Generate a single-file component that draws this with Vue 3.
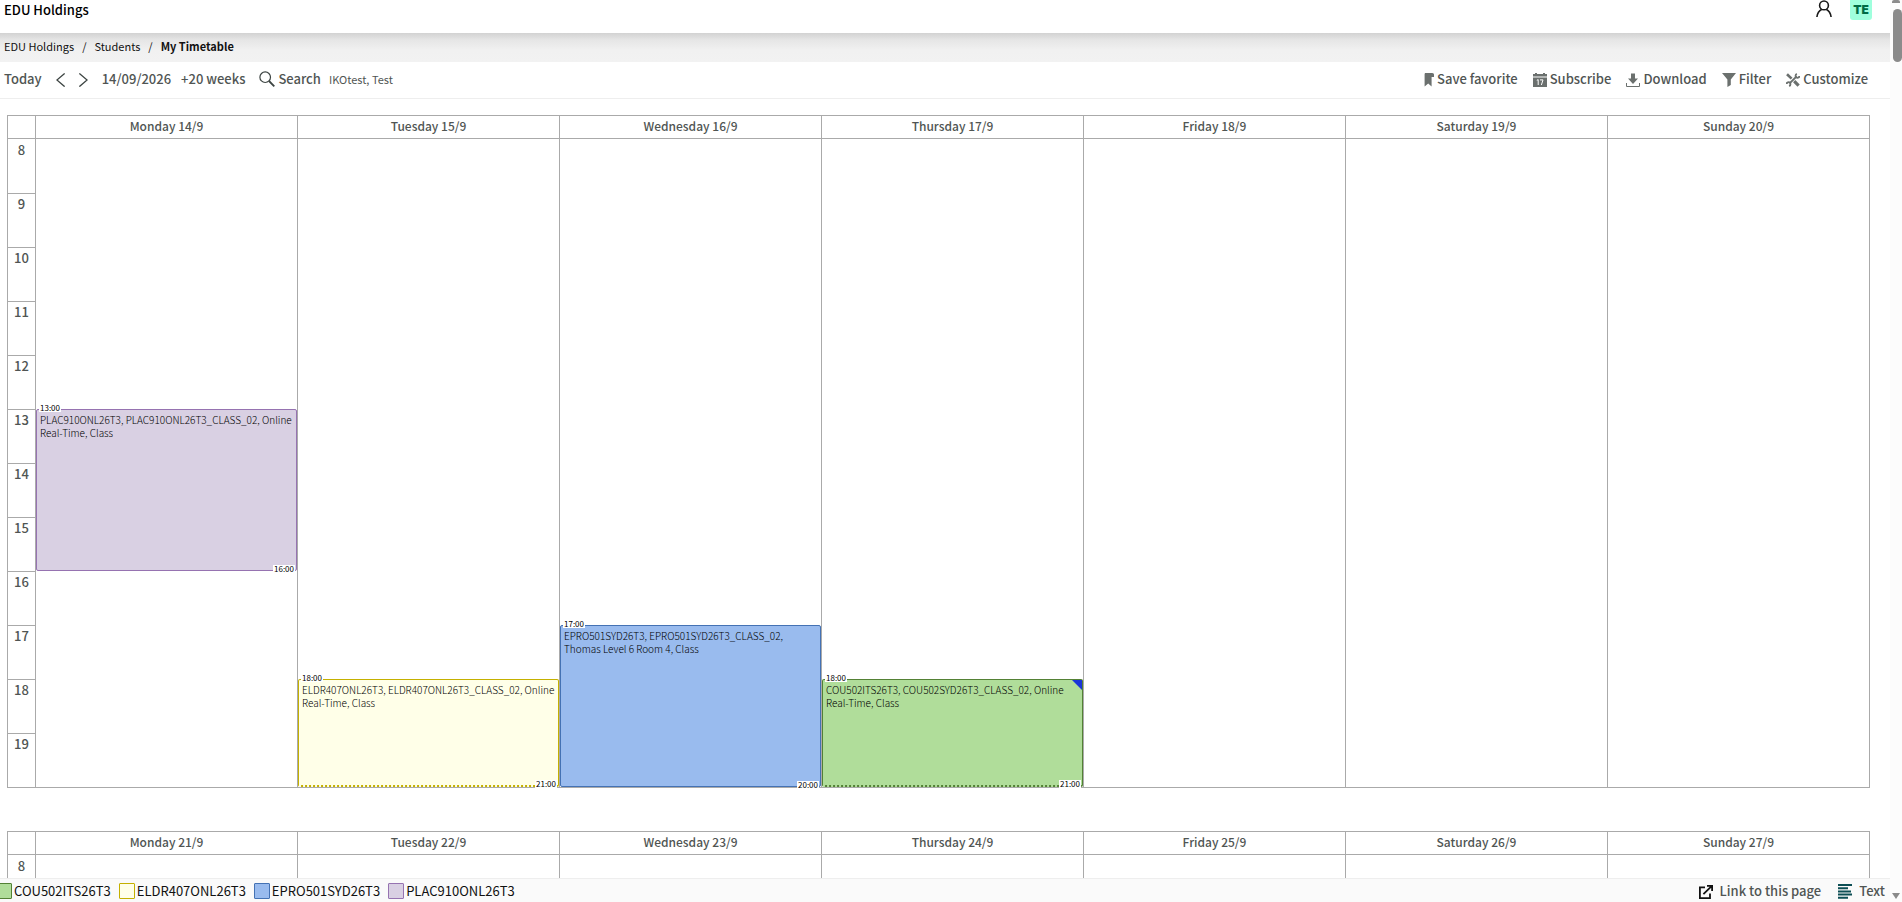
<template>
  <div class="page">
    <div class="content">
      <header class="top">
        <a class="brand" href="#">EDU Holdings</a>
        <div class="account">
          <button class="plain" aria-label="Account">
            <svg width="16" height="18" viewBox="0 0 16 18" fill="none" stroke="#1a1a1a" stroke-width="1.6">
              <circle cx="8" cy="5.4" r="4.4"/>
              <path d="M0.9 17C1.4 12.8 3.4 10.4 5.8 9.2M15.1 17C14.6 12.8 12.6 10.4 10.2 9.2"/>
            </svg>
          </button>
          <button class="avatar">TE</button>
        </div>
      </header>

      <nav class="crumbs">
        <a href="#">EDU Holdings</a><span>/</span><a href="#">Students</a><span>/</span><b>My Timetable</b>
      </nav>

      <div class="toolbar">
        <div class="tools-left">
          <button class="plain">Today</button>
          <div class="arrows">
            <button class="plain" aria-label="Previous">
              <svg width="9" height="16" viewBox="0 0 9 16" fill="none" stroke="#3c4442" stroke-width="1.3"><path d="M8.6 2.4L0.9 9L8.6 15.6"/></svg>
            </button>
            <button class="plain" aria-label="Next">
              <svg width="9" height="16" viewBox="0 0 9 16" fill="none" stroke="#3c4442" stroke-width="1.3"><path d="M0.4 2.4L8.1 9L0.4 15.6"/></svg>
            </button>
          </div>
          <button class="plain">14/09/2026</button>
          <button class="plain">+20 weeks</button>
          <button class="plain search">
            <svg width="16" height="16" viewBox="0 0 16 16" fill="none" stroke="#3c4442"><circle cx="6.2" cy="6.2" r="5.3" stroke-width="1.2"/><path d="M10 10L15.3 15.3" stroke-width="1.8"/></svg>
            Search
          </button>
          <span class="found">IKOtest, Test</span>
        </div>
        <div class="tools-right">
          <button class="plain">
            <svg width="10" height="16" viewBox="0 0 10 16" fill="#6b706e"><path d="M1.5 2H8.2C9.4 2 10 2.8 10 3.8V6H7.6V15.6L4.2 12.6L0.6 15.6V3.4C0.6 2.6 0.9 2 1.5 2Z"/></svg>
            Save favorite
          </button>
          <button class="plain">
            <svg width="14" height="16" viewBox="0 0 14 16" fill="#6b706e"><path d="M0 3H2V2H4V3H10V2H12V3H14V5.6H0ZM0 6.6H14V16H0Z"/><path d="M3.8 9.4L5.2 8.6V14M7 8.9H10L8.4 14" fill="none" stroke="#fff"/></svg>
            Subscribe
          </button>
          <button class="plain">
            <svg width="14" height="16" viewBox="0 0 14 16" fill="#6b706e"><path d="M5 2.5H9V7.5H12L7 13L2 7.5H5Z"/><path d="M0.5 12V15.5H13.5V12" fill="none" stroke="#6b706e"/></svg>
            Download
          </button>
          <button class="plain">
            <svg width="14" height="16" viewBox="0 0 14 16" fill="#6b706e"><path d="M0 2H14L8.8 8.6V14L5.4 16V8.6Z"/></svg>
            Filter
          </button>
          <button class="plain">
            <svg width="14" height="16" viewBox="0 0 14 16" fill="none" stroke="#6b706e"><path d="M1 3.2L5.6 7.6" stroke-width="2.6"/><path d="M8.2 10.2L12.6 14.6" stroke-width="3.2"/><path d="M3.6 12.4L10.6 5.4" stroke-width="2"/><path d="M10.8 2.8C9 3.8 9.2 6.8 11.2 6.8C12.6 6.8 13.4 6 13.3 5M3.2 15.2C5 14.2 4.8 11.2 2.8 11.2C1.4 11.2 0.6 12 0.7 13" stroke-width="1.8"/></svg>
            Customize
          </button>
        </div>
      </div>

      <main class="weeks">
        <section v-for="week in weeks" :key="week.days[0]" class="week">
          <div class="head corner"></div>
          <div v-for="day in week.days" :key="day" class="head">{{ day }}</div>
          <div class="hours">
            <div v-for="hour in hours" :key="hour" class="hour">{{ hour }}</div>
          </div>
          <div v-for="(day, i) in week.days" :key="day + i" class="day">
            <article
                v-for="event in week.events.filter(e => e.day === i)"
                :key="event.text"
                class="event"
                :class="[event.color, {continues: event.end > LAST_HOUR}]"
                :style="place(event)">
              {{ event.text }}
              <span class="start">{{ event.start }}:00</span>
              <span class="end">{{ event.end }}:00</span>
              <i v-if="event.note" class="note"></i>
            </article>
          </div>
        </section>
      </main>

      <footer class="bottom">
        <ul class="legend">
          <li v-for="item in legend" :key="item.name"><i class="swatch" :class="item.color"></i>{{ item.name }}</li>
        </ul>
        <div class="links">
          <a href="#">
            <svg width="14" height="16" viewBox="0 0 14 16" fill="none" stroke="#111" stroke-width="1.8"><path d="M6 4.4H0.9V15.1H11V10.4M4.4 11.2L12.4 3.4M8 2.9H13.1V8"/></svg>
            Link to this page
          </a>
          <a href="#">
            <svg width="14" height="16" viewBox="0 0 14 16" stroke="#0d4f55" stroke-width="2"><path d="M0 2H14M0 5.2H10M0 8.4H13M0 11.6H14M0 14.8H10"/></svg>
            Text
          </a>
        </div>
      </footer>
    </div>

    <div class="scrollbar">
      <i class="up"></i>
      <i class="thumb"></i>
      <i class="down"></i>
    </div>
  </div>
</template>

<script setup>
const FIRST_HOUR = 8;
const LAST_HOUR = 20;
const HOUR_HEIGHT = 54;

const hours = Array.from({length: LAST_HOUR - FIRST_HOUR}, (_, i) => FIRST_HOUR + i);

const names = ["Monday", "Tuesday", "Wednesday", "Thursday", "Friday", "Saturday", "Sunday"];
const daysFrom = (date) => names.map((name, i) => `${name} ${date + i}/9`);

const weeks = [
  {
    days: daysFrom(14),
    events: [
      {day: 0, start: 13, end: 16, color: "purple", text: "PLAC910ONL26T3, PLAC910ONL26T3_CLASS_02, Online Real-Time, Class"},
      {day: 1, start: 18, end: 21, color: "yellow", text: "ELDR407ONL26T3, ELDR407ONL26T3_CLASS_02, Online Real-Time, Class"},
      {day: 2, start: 17, end: 20, color: "blue", text: "EPRO501SYD26T3, EPRO501SYD26T3_CLASS_02, Thomas Level 6 Room 4, Class"},
      {day: 3, start: 18, end: 21, color: "green", note: true, text: "COU502ITS26T3, COU502SYD26T3_CLASS_02, Online Real-Time, Class"},
    ],
  },
  {days: daysFrom(21), events: []},
];

const legend = [
  {name: "COU502ITS26T3", color: "green"},
  {name: "ELDR407ONL26T3", color: "yellow"},
  {name: "EPRO501SYD26T3", color: "blue"},
  {name: "PLAC910ONL26T3", color: "purple"},
];

// events that run past the last hour are cut at the bottom of the day
const place = ({start, end}) => ({
  top: (start - FIRST_HOUR) * HOUR_HEIGHT + "px",
  height: (Math.min(end, LAST_HOUR) - start) * HOUR_HEIGHT + "px",
});
</script>

<style>
body {
  margin: 0;
  background: #fff;
}
</style>

<style scoped>
.page {
  display: flex;
  height: 100vh;
  overflow: hidden;
  font-family: "Noto Sans CJK SC", "Noto Sans", sans-serif;
  font-size: 13px;
  line-height: 18px;
  color: #505553;
}

.content {
  flex: 1;
  min-width: 0;
  display: flex;
  flex-direction: column;
}

a {
  color: inherit;
  text-decoration: none;
}

.plain {
  display: flex;
  align-items: center;
  gap: 3px;
  padding: 0;
  border: none;
  background: none;
  font: inherit;
  font-weight: 500;
  color: inherit;
  white-space: nowrap;
}

svg {
  flex: none;
  display: block;
}

.top {
  height: 33px;
  flex: none;
  display: flex;
  justify-content: space-between;
  align-items: flex-start;
  padding: 0 18px 0 4px;
}

.brand {
  line-height: 20px;
  font-weight: 500;
  color: #000;
}

.account {
  display: flex;
  align-items: flex-start;
  gap: 18px;
}

.avatar {
  width: 22px;
  height: 20px;
  padding: 0;
  border: none;
  border-radius: 0 0 3px 3px;
  background: #9fffdd;
  color: #006b45;
  font: 900 12px/18px Inter, sans-serif;
}

.crumbs {
  height: 25px;
  flex: none;
  display: flex;
  align-items: center;
  gap: 8px;
  padding: 0 0 4px 4px;
  background: linear-gradient(#d2d2d2, #e6e6e6 25%, #f1f1f1 60%, #f2f2f2);
  font-size: 11px;
  color: #111;
}

.crumbs b {
  font-weight: 700;
  color: #111;
}

.toolbar {
  height: 34px;
  flex: none;
  display: flex;
  justify-content: space-between;
  align-items: center;
  padding: 0 22px 2px 4px;
  border-bottom: 1px solid #eee;
}

.tools-left,
.tools-right {
  display: flex;
  align-items: center;
}

.tools-left {
  gap: 10px;
}

.tools-right {
  gap: 15px;
}

.arrows {
  display: flex;
  gap: 14px;
  padding: 0 4px;
}

.search {
  padding-left: 4px;
}

.found {
  margin-left: -2px;
  font-size: 11px;
}

.weeks {
  flex: 1;
  min-height: 0;
  overflow: hidden;
  padding: 16px 20px 0 7px;
}

.week {
  display: grid;
  grid-template-columns: 29px repeat(7, 1fr);
  margin-bottom: 43px;
  border: solid #aaa;
  border-width: 1px 0 1px 0;
}

.head {
  height: 22px;
  border: solid #aaa;
  border-width: 0 1px 1px 0;
  font-size: 12px;
  line-height: 20px;
  font-weight: 500;
  text-align: center;
}

.hours,
.day {
  position: relative;
  border-right: 1px solid #aaa;
}

.corner,
.hours {
  border-left: 1px solid #aaa;
}

.hour {
  box-sizing: border-box;
  height: 54px;
  border-top: 1px solid #aaa;
  line-height: 20px;
  font-weight: 500;
  text-align: center;
}

.hour:first-child {
  border-top-color: transparent;
}

.event {
  position: absolute;
  left: 0;
  right: 0;
  box-sizing: border-box;
  padding: 3px 0 3px 3px;
  border: 1px solid;
  border-radius: 2px;
  font-size: 10px;
  line-height: 13px;
  font-weight: 300;
  color: #000;
}

.purple {
  background: #d9d0e3;
  border-color: #9673b1;
}

.yellow {
  background: #ffffe8;
  border-color: #c4b000;
}

.blue {
  background: #99bbee;
  border-color: #4472b4;
}

.green {
  background: #b0dd9a;
  border-color: #538135;
}

.continues {
  border-bottom-width: 2px;
  border-bottom-style: dotted;
}

.start,
.end {
  position: absolute;
  height: 8px;
  padding: 0 1px;
  background: #fff;
  font-size: 8px;
  line-height: 8px;
  font-weight: 400;
}

.start {
  top: -6px;
  left: 2px;
}

.end {
  bottom: -3px;
  right: 1px;
}

.note {
  position: absolute;
  top: 0;
  right: 0;
  border: 5px solid #1a35d8;
  border-left-color: transparent;
  border-bottom-color: transparent;
}

.bottom {
  height: 23px;
  flex: none;
  display: flex;
  justify-content: space-between;
  align-items: center;
  padding-right: 5px;
  border-top: 1px solid #eee;
  background: #fafafa;
}

.legend {
  display: flex;
  gap: 8px;
  margin: 0 0 0 -4px;
  padding: 0;
  list-style: none;
  color: #111;
}

.legend li {
  display: flex;
  align-items: center;
  gap: 2px;
}

.swatch {
  box-sizing: border-box;
  width: 16px;
  height: 16px;
  border-width: 1px;
  border-style: solid;
  border-radius: 1px;
}

.links {
  display: flex;
  gap: 17px;
  font-weight: 500;
}

.links a {
  display: flex;
  align-items: center;
  gap: 7px;
}

.scrollbar {
  width: 12px;
  flex: none;
  display: flex;
  flex-direction: column;
  align-items: center;
  background: #fcfcfc;
}

.up {
  width: 8px;
  height: 3px;
  border-radius: 2px 2px 0 0;
  background: #8b8b8b;
}

.thumb {
  width: 9px;
  height: 53px;
  margin-top: 6px;
  align-self: flex-end;
  border-radius: 5px;
  background: #8b8b8b;
}

.down {
  margin: auto 0 3px;
  border: 4px solid transparent;
  border-top: 6px solid #8b8b8b;
  border-bottom: none;
}
</style>
